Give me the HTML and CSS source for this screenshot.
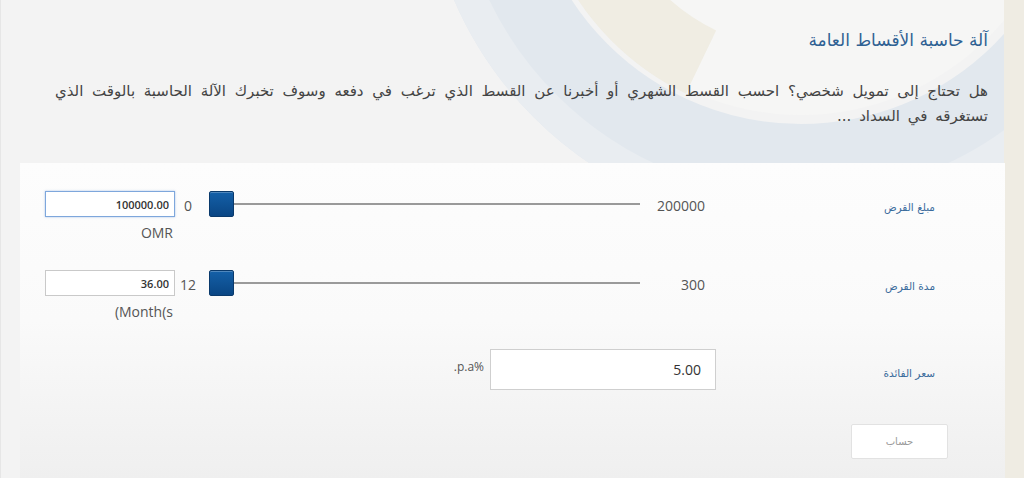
FILE: index.html
```html
<!DOCTYPE html>
<html lang="ar" dir="rtl">
<head>
<meta charset="utf-8">
<title>آلة حاسبة الأقساط العامة</title>
<link rel="stylesheet" href="styles.css">
</head>
<body>
<svg class="bg-art" width="1024" height="478" viewBox="0 0 1024 478" aria-hidden="true">
  <circle cx="800" cy="-150" r="265" fill="#f6f6f5"/>
  <circle cx="800" cy="-150" r="326" fill="none" stroke="#e2e8ee" stroke-width="104"/>
  <circle cx="800" cy="-150" r="362" fill="none" stroke="#e9edf1" stroke-width="32"/>
  <path d="M 589 -50 A 235 235 0 0 0 700 62" fill="none" stroke="#efebdf" stroke-width="70" opacity="0.85"/>
  <rect x="1003" y="0" width="21" height="478" fill="#efece3"/>
</svg>
<div class="wrap">
  <header class="intro">
    <h1 class="title">آلة حاسبة الأقساط العامة</h1>
    <p class="lead">هل تحتاج إلى تمويل شخصي؟ احسب القسط الشهري أو أخبرنا عن القسط الذي ترغب في دفعه وسوف تخبرك الآلة الحاسبة بالوقت الذي تستغرقه في السداد ...</p>
  </header>
  <section class="panel">
    <div class="row">
      <div class="label">مبلغ القرض</div>
      <div class="max">200000</div>
      <div class="slider"><span class="thumb"></span></div>
      <div class="min">0</div>
      <div class="field">
        <input class="num focus" type="text" value="100000.00">
        <div class="unit">OMR</div>
      </div>
    </div>
    <div class="row">
      <div class="label">مدة القرض</div>
      <div class="max">300</div>
      <div class="slider"><span class="thumb"></span></div>
      <div class="min">12</div>
      <div class="field">
        <input class="num" type="text" value="36.00">
        <div class="unit">(Month(s</div>
      </div>
    </div>
    <div class="row row-rate">
      <div class="label label-rate">سعر الفائدة</div>
      <input class="num big" type="text" value="5.00">
      <div class="pct">%p.a.</div>
    </div>
    <div class="actions">
      <button class="calc" type="button">حساب</button>
    </div>
  </section>
</div>
</body>
</html>
```

FILE: styles.css
```css
html, body {
  margin: 0;
  padding: 0;
}
body {
  width: 1024px;
  height: 478px;
  overflow: hidden;
  position: relative;
  background: #f3f3f3;
  font-family: "Open Sans", "DejaVu Sans", sans-serif;
  color: #444;
  border-left: 1px solid #e6e6e6;
  box-sizing: border-box;
}
.bg-art {
  position: absolute;
  left: 0;
  top: 0;
  z-index: 0;
}
.wrap {
  position: relative;
  z-index: 1;
  margin: 0 19px 0 19px;
}
.intro {
  padding: 27px 17px 0 35px;
  height: 163px;
  box-sizing: border-box;
}
.title {
  margin: 0;
  font-family: "DejaVu Sans", sans-serif;
  font-weight: normal;
  font-size: 17px;
  line-height: 26px;
  color: #2f6193;
}
.lead {
  margin: 26px 0 0;
  font-family: "DejaVu Sans", sans-serif;
  font-size: 15px;
  line-height: 25px;
  word-spacing: 3px;
  text-align: justify;
  color: #444;
}
.panel {
  background: linear-gradient(#fdfdfd 0%, #fafafa 50%, #efefef 100%);
  padding: 28px 70px 0 25px;
  height: 315px;
  box-sizing: border-box;
}
.row {
  display: flex;
  align-items: flex-start;
  height: 79px;
}
.label {
  flex: 0 0 230px;
  padding-top: 3px;
  font-family: "DejaVu Sans", sans-serif;
  font-size: 10.5px;
  line-height: 26px;
  color: #3a6b9c;
}
.max {
  flex: 0 0 60px;
  padding-top: 2px;
  font-size: 14px;
  line-height: 26px;
  color: #555;
}
.slider {
  flex: 0 0 431px;
  height: 26px;
  position: relative;
  margin-right: 5px;
  background: linear-gradient(#9a9a9a, #9a9a9a) no-repeat left 25px center / 406px 2px;
}
.thumb {
  position: absolute;
  left: 0;
  top: 0;
  width: 23px;
  height: 24px;
  border: 1px solid #0a3a6c;
  border-radius: 2px;
  background: linear-gradient(#1460a8, #0a4684);
  box-shadow: inset 0 1px 0 rgba(255,255,255,0.25);
}
.min {
  flex: 0 0 34px;
  box-sizing: border-box;
  padding-right: 8px;
  padding-top: 2px;
  text-align: center;
  font-size: 14px;
  line-height: 26px;
  color: #555;
}
.field {
  flex: 0 0 130px;
  display: flex;
  flex-direction: column;
}
.num {
  box-sizing: border-box;
  width: 130px;
  height: 26px;
  margin: 0;
  padding: 0 5px;
  border: 1px solid #c9c9c9;
  background: #fff;
  direction: ltr;
  text-align: right;
  font-family: "Open Sans", sans-serif;
  font-size: 11px;
  font-weight: 600;
  color: #333;
  outline: none;
}
.num.focus {
  border: 1px solid #7ea7dc;
  box-shadow: 0 0 2px rgba(90,140,210,0.5);
}
.unit {
  direction: ltr;
  text-align: right;
  margin-top: 7px;
  padding-right: 2px;
  font-size: 14px;
  line-height: 18px;
  color: #555;
}
.row-rate {
  height: 75px;
  align-items: flex-start;
}
.label-rate {
  flex: 0 0 219px;
  line-height: 42px;
}
.num.big {
  width: 226px;
  height: 41px;
  padding: 0 14px;
  border: 1px solid #cfcfcf;
  font-size: 14px;
  font-weight: normal;
}
.pct {
  margin-right: 6px;
  padding-top: 9px;
  font-size: 12px;
  color: #555;
}
.actions {
  display: flex;
  margin-right: -13px;
}
.calc {
  width: 97px;
  height: 35px;
  border: 1px solid #e2e2e2;
  border-radius: 2px;
  background: #fff;
  font-family: "DejaVu Sans", sans-serif;
  font-size: 10px;
  color: #999;
  cursor: pointer;
}
```
